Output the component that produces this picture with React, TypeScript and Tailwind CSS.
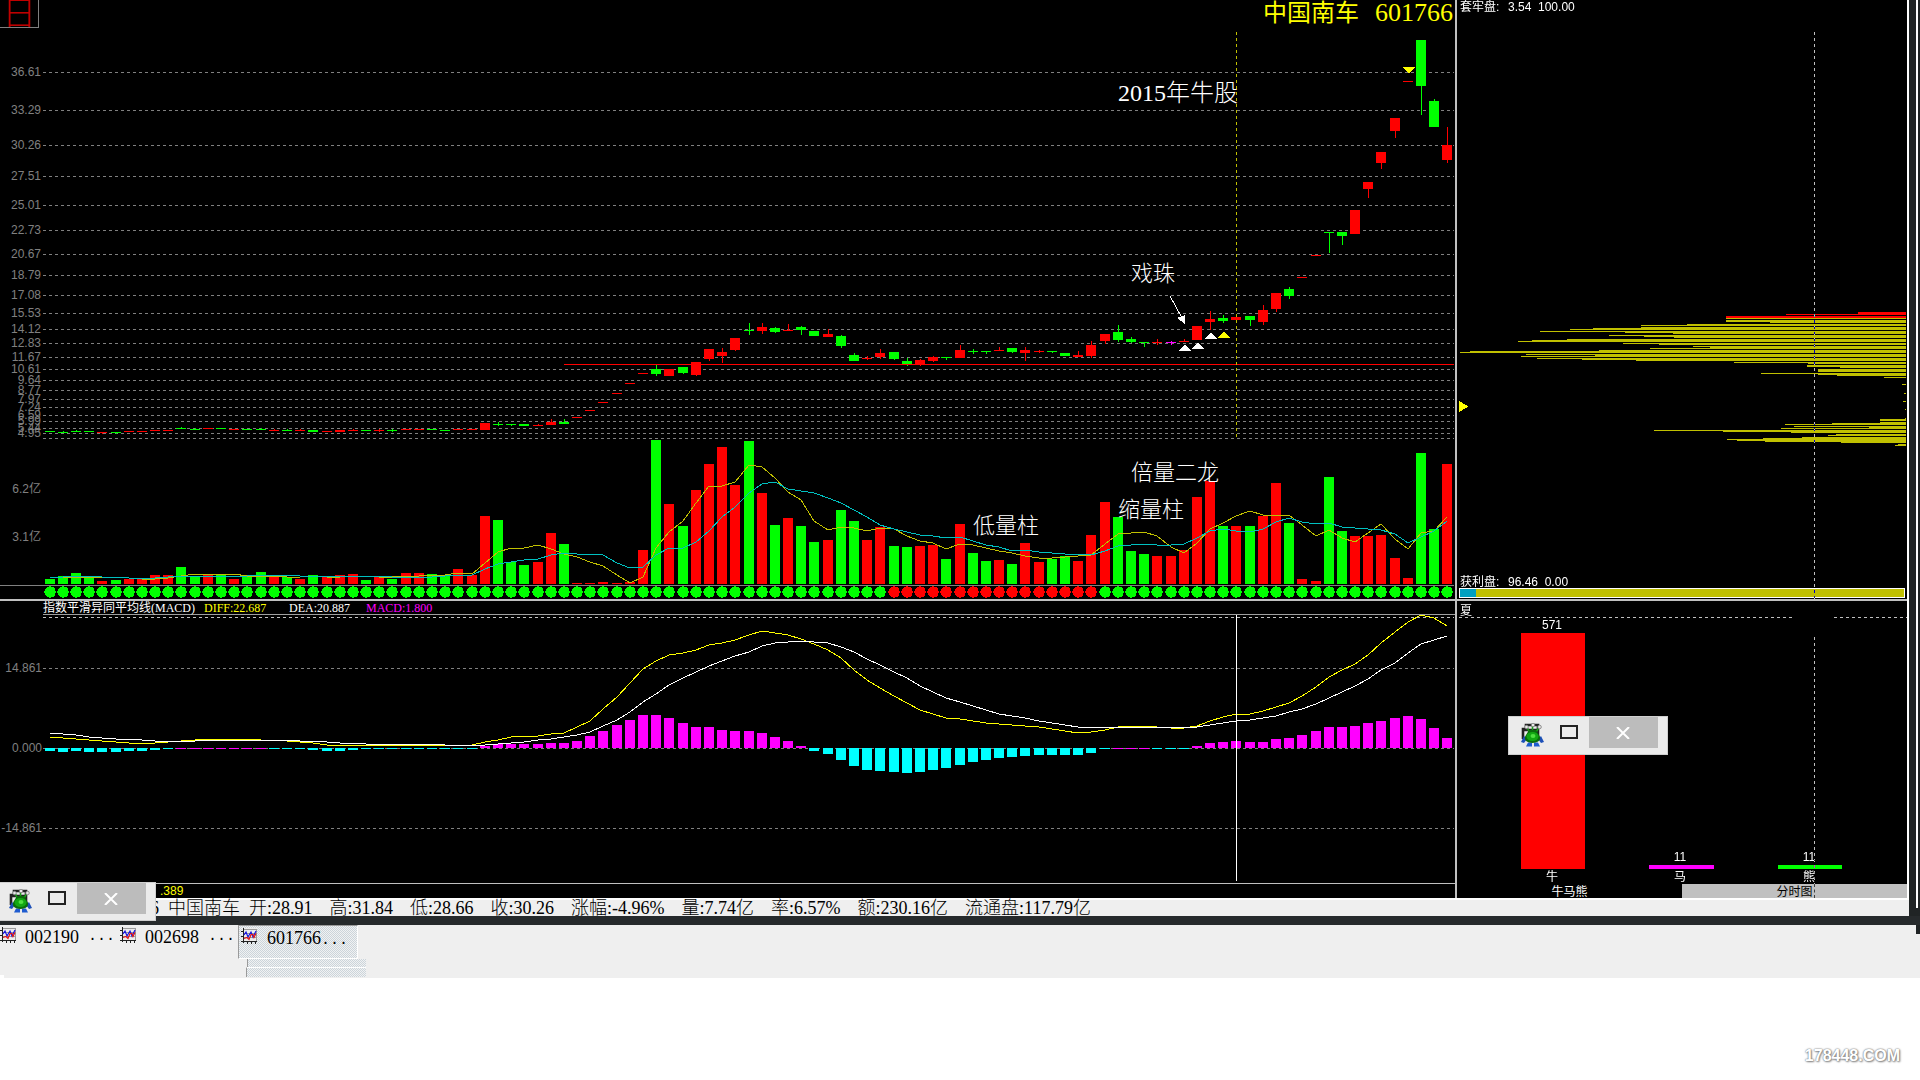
import React from "react";

const PITCH = 13.187;
const barX = (i: number) => Math.floor(45.11 + PITCH * i);

const COLORS: Record<string, string> = { r: "#ff0000", g: "#00ff00", m: "#ff00ff" };

// top of the bar, r = up day, g = down day
const VOLUME: [number, string][] = [
  [579, "g"], [576, "g"], [573, "g"], [577, "g"], [581, "r"], [580, "g"], [579, "r"], [579, "r"], [575, "r"], [575, "r"],
  [567, "g"], [576, "g"], [575, "r"], [575, "g"], [579, "r"], [577, "g"], [572, "g"], [576, "r"], [577, "g"], [579, "r"],
  [575, "g"], [577, "r"], [575, "r"], [574, "r"], [580, "g"], [577, "r"], [579, "g"], [573, "r"], [573, "r"], [574, "g"],
  [576, "g"], [569, "r"], [575, "r"], [516, "r"], [520, "g"], [562, "g"], [565, "g"], [562, "r"], [533, "r"], [544, "g"],
  [583, "r"], [583, "r"], [582, "r"], [583, "r"], [582, "r"], [550, "r"], [440, "g"], [504, "r"], [526, "g"], [490, "r"],
  [464, "r"], [447, "r"], [485, "r"], [441, "g"], [493, "r"], [525, "g"], [518, "r"], [526, "g"], [542, "g"], [540, "r"],
  [510, "g"], [521, "g"], [540, "r"], [527, "r"], [546, "g"], [547, "g"], [546, "r"], [545, "r"], [559, "g"], [524, "r"],
  [553, "g"], [561, "g"], [560, "r"], [564, "g"], [543, "r"], [562, "r"], [559, "g"], [556, "g"], [561, "r"], [535, "r"],
  [502, "r"], [517, "g"], [551, "g"], [554, "g"], [556, "r"], [556, "r"], [550, "r"], [497, "r"], [481, "r"], [526, "g"],
  [526, "r"], [526, "g"], [516, "r"], [483, "r"], [523, "g"], [579, "r"], [581, "r"], [477, "g"], [531, "g"], [536, "r"],
  [536, "r"], [535, "r"], [558, "r"], [578, "r"], [453, "g"], [529, "g"], [464, "r"],
];

// body top, body bottom, wick top, wick bottom
const CANDLES: [number, number, number, number][] = [
  [431, 432, 431, 432], [432, 433, 431, 433], [431, 432, 430, 432], [431, 432, 431, 432], [432, 433, 432, 434],
  [432, 433, 432, 434], [431, 432, 431, 432], [431, 432, 431, 432], [430, 431, 430, 431], [430, 431, 430, 431],
  [428, 429, 427, 429], [429, 430, 428, 430], [428, 429, 428, 429], [428, 429, 428, 429], [429, 430, 429, 430],
  [429, 430, 429, 430], [429, 430, 428, 430], [430, 431, 429, 431], [430, 431, 429, 431], [430, 431, 429, 431],
  [430, 432, 430, 432], [431, 432, 431, 432], [430, 432, 430, 432], [430, 431, 429, 431], [430, 431, 430, 431],
  [430, 431, 429, 432], [430, 431, 429, 432], [429, 430, 429, 430], [429, 430, 429, 430], [429, 430, 429, 430],
  [430, 431, 430, 431], [429, 430, 429, 430], [429, 430, 429, 430], [423, 430, 423, 430], [424, 425, 422, 426],
  [424, 425, 424, 426], [424, 426, 424, 426], [425, 426, 424, 426], [422, 425, 419, 425], [422, 424, 419, 424],
  [417, 418, 417, 418], [410, 411, 410, 411], [402, 403, 402, 403], [393, 394, 393, 394], [383, 384, 383, 384],
  [373, 374, 373, 374], [369, 374, 365, 376], [369, 376, 369, 376], [367, 373, 367, 374], [362, 375, 362, 376],
  [349, 359, 349, 361], [352, 356, 348, 363], [338, 350, 338, 351], [330, 331, 323, 335], [327, 331, 323, 334],
  [328, 332, 327, 333], [330, 331, 324, 331], [327, 330, 326, 335], [331, 336, 331, 336], [334, 337, 329, 337],
  [336, 346, 335, 348], [355, 361, 353, 361], [358, 359, 356, 360], [353, 357, 349, 359], [352, 359, 352, 360],
  [361, 364, 358, 366], [360, 364, 359, 366], [357, 361, 356, 362], [357, 358, 357, 360], [350, 358, 345, 358],
  [351, 352, 349, 354], [351, 352, 351, 354], [350, 351, 347, 351], [348, 352, 348, 353], [350, 353, 347, 361],
  [351, 352, 350, 353], [351, 352, 351, 353], [353, 356, 353, 356], [355, 357, 351, 357], [345, 356, 341, 358],
  [334, 341, 334, 344], [332, 340, 325, 342], [339, 342, 337, 343], [342, 343, 342, 347], [342, 343, 339, 345],
  [342, 343, 341, 345], [341, 342, 339, 342], [326, 340, 326, 340], [319, 322, 311, 330], [318, 321, 315, 323],
  [317, 320, 314, 320], [316, 320, 316, 326], [310, 322, 305, 325], [293, 309, 293, 312], [289, 296, 287, 299],
  [277, 278, 277, 278], [255, 256, 255, 256], [232, 233, 232, 253], [232, 236, 232, 245], [210, 234, 210, 234],
  [182, 189, 182, 198], [152, 163, 152, 169], [118, 131, 118, 138], [81, 82, 81, 82], [40, 86, 40, 115],
  [101, 127, 99, 127], [145, 160, 127, 163],
];

const VOL_MA5 = [
  577, 577, 577, 577, 577, 577, 578, 579, 579, 578, 576, 574, 574, 574, 574, 576, 576, 576, 577, 577, 576, 577, 577, 576,
  576, 577, 577, 576, 576, 575, 575, 573, 574, 563, 552, 548, 548, 545, 549, 554, 557, 562, 566, 575, 583, 577, 548, 532,
  521, 503, 486, 486, 482, 465, 467, 478, 492, 500, 521, 530, 527, 528, 531, 528, 529, 536, 541, 543, 549, 544, 545, 548,
  551, 553, 556, 558, 558, 557, 556, 555, 544, 534, 533, 532, 536, 547, 553, 543, 529, 523, 516, 511, 515, 515, 515, 525,
  536, 530, 538, 542, 533, 524, 539, 549, 533, 531, 517,
];

const VOL_MA10 = [
  577, 577, 576, 576, 577, 577, 578, 578, 578, 577, 576, 576, 577, 576, 577, 576, 575, 575, 575, 576, 576, 576, 576, 576,
  576, 576, 577, 577, 577, 577, 576, 575, 575, 569, 564, 562, 560, 559, 555, 553, 554, 554, 555, 563, 568, 567, 555, 548,
  548, 542, 531, 517, 507, 493, 484, 482, 489, 491, 493, 498, 503, 510, 517, 525, 529, 532, 535, 536, 538, 537, 541, 545,
  547, 551, 550, 552, 553, 554, 554, 555, 551, 546, 545, 544, 545, 545, 544, 538, 531, 529, 531, 532, 529, 522, 518, 522,
  524, 523, 527, 528, 529, 530, 534, 543, 537, 531, 521,
];

const DIFF = [
  737, 738, 739, 740, 741, 742, 743, 743, 743, 742, 741, 740, 739, 739, 739, 739, 740, 740, 741, 742, 743, 745, 745, 745,
  745, 745, 745, 745, 745, 745, 745, 745, 745, 742, 740, 737, 736, 736, 734, 733, 727, 721, 709, 697, 683, 669, 661, 655,
  653, 650, 645, 643, 640, 635, 631, 633, 635, 639, 644, 650, 658, 670, 680, 688, 696, 703, 710, 714, 718, 719, 721, 723,
  724, 725, 726, 727, 729, 731, 733, 732, 730, 727, 726, 726, 727, 728, 728, 726, 721, 717, 714, 714, 711, 707, 703, 696,
  687, 677, 670, 664, 655, 643, 632, 622, 615, 618, 626,
];

const DEA = [
  733, 734, 735, 737, 738, 739, 739, 740, 741, 741, 741, 741, 740, 740, 740, 740, 740, 740, 740, 741, 741, 742, 743, 743,
  744, 744, 744, 744, 744, 744, 745, 745, 745, 745, 744, 743, 742, 740, 739, 737, 735, 732, 726, 720, 712, 702, 694, 685,
  678, 672, 666, 661, 656, 652, 646, 643, 642, 641, 642, 643, 647, 652, 659, 665, 672, 678, 686, 692, 698, 702, 706, 710,
  714, 716, 718, 721, 723, 725, 727, 727, 727, 727, 727, 727, 727, 727, 727, 727, 725, 723, 721, 720, 718, 716, 712, 709,
  704, 698, 692, 686, 679, 670, 663, 653, 644, 640, 636,
];

const MACD = [
  -3, -4, -3, -4, -4, -4, -3, -3, -2, -1, 1, 1, 1, 1, 1, 1, 1, -1, -1, -1, -2, -3, -3, -2, -1, -1, -1, -1, -1, -1, -1, -1,
  -1, 2, 4, 4, 4, 4, 5, 5, 7, 12, 17, 23, 28, 33, 33, 30, 25, 21, 21, 18, 17, 17, 15, 11, 7, 2, -3, -6, -12, -18, -22,
  -23, -24, -25, -24, -22, -20, -17, -14, -12, -10, -9, -8, -7, -7, -7, -7, -5, -1, 1, 1, 1, -1, -1, -1, 2, 5, 6, 7, 6, 6,
  9, 10, 13, 17, 21, 21, 22, 25, 27, 30, 32, 29, 20, 10,
];

const PRICE_GRID: [number, string][] = [
  [72, "36.61"], [110, "33.29"], [145, "30.26"], [176, "27.51"], [205, "25.01"], [230, "22.73"], [254, "20.67"],
  [275, "18.79"], [295, "17.08"], [313, "15.53"], [329, "14.12"], [343, "12.83"], [357, "11.67"], [369, "10.61"],
  [380, "9.64"], [390, "8.77"], [399, "7.97"], [407, "7.24"], [415, "6.59"], [421, "5.99"], [428, "5.44"],
  [433, "4.95"], [438, ""],
];

// y, left edge, height
const CHIPS: [number, number, number?][] = [
  [318, 1726], [320, 1726, 2], [322, 1770], [324, 1687], [325, 1641], [327, 1641], [328, 1593], [329, 1570],
  [331, 1540], [332, 1625], [333, 1673], [335, 1609], [336, 1644], [337, 1674], [339, 1567], [340, 1532], [341, 1518],
  [343, 1623], [344, 1659], [346, 1693], [347, 1710], [348, 1650], [350, 1599], [351, 1470], [352, 1460], [354, 1526],
  [355, 1595], [356, 1521], [358, 1537], [359, 1582], [360, 1636], [362, 1734], [363, 1808], [365, 1807, 2],
  [367, 1840], [369, 1818, 3], [373, 1761], [374, 1818], [375, 1837], [377, 1884], [384, 1902], [393, 1904],
  [401, 1903], [409, 1905], [418, 1905], [419, 1880, 2], [422, 1880], [423, 1832], [424, 1785], [426, 1794],
  [427, 1869], [428, 1781], [430, 1654], [431, 1723], [432, 1791], [434, 1836], [435, 1828], [437, 1802], [438, 1763],
  [439, 1727], [440, 1737], [441, 1765], [442, 1841], [444, 1898], [445, 1895],
];

const HOLDERS = [
  { name: "牛", value: 571, x: 1521, w: 64, top: 633, color: "#ff0000" },
  { name: "马", value: 11, x: 1649, w: 65, top: 865, color: "#ff00ff" },
  { name: "熊", value: 11, x: 1778, w: 64, top: 865, color: "#00ff00" },
];

const QUOTE = [
  "开:28.91", "高:31.84", "低:28.66", "收:30.26", "涨幅:-4.96%", "量:7.74亿", "率:6.57%", "额:230.16亿", "流通盘:117.79亿",
];

const points = (ys: number[]) => ys.map((y, i) => `${barX(i) + 5},${y}`).join(" ");

function HDash({ x1 = 43, x2 = 1454, y, color = "#808080" }: { x1?: number; x2?: number; y: number; color?: string }) {
  return <line x1={x1} x2={x2} y1={y + 0.5} y2={y + 0.5} stroke={color} strokeDasharray="3 3" />;
}

function Line({ ys, color }: { ys: number[]; color: string }) {
  return <polyline points={points(ys)} fill="none" stroke={color} strokeWidth="1" />;
}

function PriceChart() {
  return (
    <svg
      viewBox="0 0 1455 599"
      className="block w-full font-['Liberation_Sans','Noto_Sans_CJK_SC',sans-serif] text-[12px]"
      shapeRendering="crispEdges"
      role="img"
      aria-label="中国南车 K线与成交量"
    >
      {PRICE_GRID.map(([y, label]) => (
        <g key={y}>
          <HDash y={y} />
          {label && <text x="41" y={y + 4} textAnchor="end" fill="#808080">{label}</text>}
        </g>
      ))}
      <text x="41" y="493" textAnchor="end" fill="#808080">6.2亿</text>
      <text x="41" y="541" textAnchor="end" fill="#808080">3.1亿</text>
      {CANDLES.map(([top, bottom, high, low], i) => {
        const fill = i === 85 ? COLORS.m : COLORS[VOLUME[i][1]];
        return (
          <g key={i} fill={fill}>
            <rect x={barX(i)} y={top} width="10" height={bottom - top} />
            <rect x={barX(i) + 5} y={high} width="1" height={low - high} />
          </g>
        );
      })}
      <rect x="564" y="364" width="890" height="1" fill="#ff0000" />
      <line x1="1236.5" x2="1236.5" y1="32" y2="438" stroke="#c0c000" strokeDasharray="3 3" />
      {VOLUME.map(([top, c], i) => (
        <rect key={i} x={barX(i)} y={top} width="10" height={584 - top} fill={COLORS[c]} />
      ))}
      <Line ys={VOL_MA5} color="#c0c000" />
      <Line ys={VOL_MA10} color="#00c0c0" />
      <rect x="0" y="585" width="1454" height="1" fill="#808080" />
      {VOLUME.map((_, i) => {
        const x = barX(i);
        return (
          <g key={i} fill={i >= 64 && i < 80 ? "#ff0000" : "#00ff00"}>
            <path d={`M${x + 2} 587h6l2 2v6l-2 2h-6l-2-2v-6z`} />
            <rect x={x + 4} y="586" width="2" height="12" />
            <rect x={x - 1} y="591" width="12" height="2" />
          </g>
        );
      })}
      <g fill="#ffffff">
        <path d="M1178 351h13l-5-6h-2z" />
        <path d="M1191 349h13l-5-6h-2z" />
        <path d="M1204 339h13l-5-6h-2z" />
        <path d="M1177 318l8-3v9z" />
      </g>
      <line x1="1170" y1="296" x2="1182" y2="318" stroke="#ffffff" />
      <path d="M1217 338h13l-5-6h-2z" fill="#ffff00" />
      <path d="M1402 67h13l-5 6h-2z" fill="#ffff00" />
      <g fill="#ffffff" className="font-['Liberation_Serif','Noto_Sans_CJK_SC',serif] text-[22px] font-light">
        <text x="1118" y="101" className="text-[24px]">2015年牛股</text>
        <text x="1131" y="281">戏珠</text>
        <text x="1131" y="480">倍量二龙</text>
        <text x="1118" y="517">缩量柱</text>
        <text x="973" y="533">低量柱</text>
      </g>
      <g fill="#ffff00" className="font-['Liberation_Serif','Noto_Sans_CJK_SC',serif]">
        <text x="1263" y="21" className="text-[24px]">中国南车</text>
        <text x="1453" y="21" textAnchor="end" className="text-[26px]">601766</text>
      </g>
    </svg>
  );
}

function MacdChart() {
  return (
    <svg
      viewBox="0 615 1455 268"
      className="block w-full font-['Liberation_Sans',sans-serif] text-[12px]"
      shapeRendering="crispEdges"
      role="img"
      aria-label="MACD"
    >
      <HDash y={617} color="#c0c0c0" />
      <HDash y={668} />
      <HDash y={748} />
      <HDash y={828} />
      <g fill="#808080" textAnchor="end">
        <text x="42" y="672">14.861</text>
        <text x="42" y="752">0.000</text>
        <text x="42" y="832">-14.861</text>
      </g>
      {MACD.map((v, i) => (
        <rect
          key={i}
          x={barX(i)}
          y={v > 1 ? 748 - v : 748}
          width="10"
          height={Math.abs(v)}
          fill={v > 0 ? "#ff00ff" : "#00ffff"}
        />
      ))}
      <Line ys={DIFF} color="#ffff00" />
      <Line ys={DEA} color="#ffffff" />
      <rect x="1236" y="615" width="1" height="266" fill="#ffffff" />
    </svg>
  );
}

function ChipChart() {
  return (
    <svg
      viewBox="1457 0 450 599"
      className="isolate block w-full font-['Liberation_Sans','Noto_Sans_CJK_SC',sans-serif] text-[12px]"
      shapeRendering="crispEdges"
      role="img"
      aria-label="筹码分布"
    >
      <rect x="1457" y="0" width="450" height="599" fill="#000000" />
      <text x="1460" y="11" fill="#ffffff">套牢盘:</text>
      <text x="1508" y="11" fill="#ffffff">3.54 &nbsp;100.00</text>
      <g fill="#ff0000">
        <rect x="1858" y="312" width="48" height="2" />
        <rect x="1786" y="314" width="120" height="1" />
        <rect x="1726" y="316" width="180" height="2" />
      </g>
      {CHIPS.map(([y, x, h = 1]) => (
        <rect key={y} x={x} y={y} width={1906 - x} height={h} fill="#c0c000" />
      ))}
      <path d="M1459 401l9 5v1l-9 5z" fill="#ffff00" />
      <text x="1460" y="586" fill="#ffffff">获利盘:</text>
      <text x="1508" y="586" fill="#ffffff">96.46 &nbsp;0.00</text>
      <rect x="1459" y="588" width="446" height="10" fill="#ffffff" />
      <rect x="1460" y="589" width="16" height="8" fill="#00a0c0" />
      <rect x="1476" y="589" width="428" height="8" fill="#c0c000" />
      <line x1="1814.5" x2="1814.5" y1="32" y2="599" stroke="#c0c0c0" strokeDasharray="3 3" className="mix-blend-difference" />
    </svg>
  );
}

function HolderChart() {
  return (
    <svg
      viewBox="1457 601 450 283"
      className="isolate block w-full font-['Liberation_Sans','Noto_Sans_CJK_SC',sans-serif] text-[12px]"
      shapeRendering="crispEdges"
      role="img"
      aria-label="牛马熊"
    >
      <rect x="1457" y="601" width="450" height="283" fill="#000000" />
      <text x="1460" y="615" fill="#ffffff">夏</text>
      <HDash x1={1459} x2={1793} y={617} color="#c0c0c0" />
      <HDash x1={1834} x2={1907} y={617} color="#c0c0c0" />
      {HOLDERS.map((h) => (
        <g key={h.name} textAnchor="middle" fill="#ffffff">
          <rect x={h.x} y={h.top} width={h.w} height={869 - h.top} fill={h.color} />
          <text x={h.x + 31} y={h.top - 4}>{h.value}</text>
          <text x={h.x + 31} y="881">{h.name}</text>
        </g>
      ))}
      <line x1="1814.5" x2="1814.5" y1="637" y2="884" stroke="#c0c0c0" strokeDasharray="3 3" className="mix-blend-difference" />
    </svg>
  );
}

function FrogIcon() {
  return (
    <svg viewBox="0 0 24 24" className="size-6 shrink-0" aria-hidden="true">
      <path d="M2 16V6h3V2h12v13M2 7h14" fill="none" stroke="#222" strokeWidth="2.6" />
      <path d="M3 13l-3 6 3 1 3-4zM20 13l3 6-3 1-3-4z" fill="#1d50b8" />
      <path d="M5 23.500l2-4h4v4zM13 23.500v-4h4l2 4z" fill="#1f5cd0" />
      <path d="M9 11L6 4M11.500 10V3M14 11l4-7" stroke="#18a018" strokeWidth="1.600" />
      <path d="M8 7h7l3 5c3 4 0 8-6.500 8S2 16 5 12z" fill="#0a6d0c" />
      <ellipse cx="11.500" cy="13.500" rx="6" ry="4.500" fill="#12a812" />
      <ellipse cx="12" cy="13" rx="2.500" ry="2" fill="#4ee040" />
      <g fill="#e8e8e8" stroke="#777" strokeWidth="0.800">
        <circle cx="5.500" cy="4" r="1.800" />
        <circle cx="12" cy="2" r="1.800" />
        <circle cx="18.500" cy="4" r="1.800" />
      </g>
    </svg>
  );
}

function FloatingWindow({ className }: { className: string }) {
  return (
    <div className={`absolute flex h-[39px] w-40 items-start border border-[#cfcfcf] bg-[#ebebeb] ${className}`}>
      <div className="mt-[6px] ml-3">
        <FrogIcon />
      </div>
      <button type="button" aria-label="最大化" className="mt-2 ml-[15px] h-[14px] w-[18px] border-2 border-[#222]" />
      <button type="button" aria-label="关闭" className="ml-[11px] flex h-[31px] w-[69px] items-center justify-center bg-[#bcbcbc]">
        <svg viewBox="0 0 14 12" className="mr-px h-3 w-[14px]" aria-hidden="true">
          <path d="M1 0l12 12M13 0L1 12" stroke="#fff" strokeWidth="2" />
        </svg>
      </button>
    </div>
  );
}

function ChartIcon() {
  return (
    <svg viewBox="0 0 16 16" className="size-4 shrink-0" aria-hidden="true">
      <path d="M1 0h15v13H1z" fill="#ececec" />
      <path d="M2 1.500h14M2 5.500h14M2 9.500h14M15.500 1v12" stroke="#9c9c9c" fill="none" />
      <path d="M2.500 0v15M0 13.500h16M0 3.500h2M0 8.500h2M6.500 13v3M10.500 13v3M14.500 13v3" stroke="#222" fill="none" />
      <path d="M3 7l2-3 2 5 3-5 2 5 3-6" fill="none" stroke="#1515e0" strokeWidth="1.200" />
      <path d="M3 10.500l3-1 2 2 2-5h2l1 3 2-4" fill="none" stroke="#e01515" strokeWidth="1.200" />
    </svg>
  );
}

function Dots() {
  return <span className="font-['Liberation_Mono',monospace] text-[15px]">...</span>;
}

export default function App() {
  return (
    <div className="relative flex min-h-screen flex-col overflow-hidden bg-white font-['Liberation_Serif','Noto_Sans_CJK_SC',serif] text-black">
      <div className="flex bg-[#202425]">
        <div className="min-w-0 flex-1 bg-[#efefef]">
          <div className="flex border-b-2 border-white bg-black">
            <main className="min-w-0 flex-[1455]">
              <PriceChart />
              <div className="h-[2px] bg-[#c0c0c0]" />
              <header className="ml-[43px] flex h-[14px] border-b border-[#a0a0a0] text-[12px] leading-[14px] whitespace-pre text-white">
                <span className="w-[161px]">指数平滑异同平均线(MACD)</span>
                <span className="w-[85px] text-[#ffff00]">DIFF:22.687</span>
                <span className="w-[77px]">DEA:20.887</span>
                <span className="text-[#ff00ff]">MACD:1.800</span>
              </header>
              <MacdChart />
              <div className="h-[15px] border-t border-[#c0c0c0] pl-[160px] font-['Liberation_Sans',sans-serif] text-[12px] leading-[14px] text-[#ffff00]">
                .389
              </div>
            </main>
            <div className="w-[2px] bg-[#c0c0c0]" />
            <aside className="min-w-0 flex-[450]">
              <ChipChart />
              <div className="h-[2px] bg-[#c0c0c0]" />
              <HolderChart />
              <nav className="relative flex h-[14px] font-['Noto_Sans_CJK_SC',sans-serif] text-[12px] leading-[14px]">
                <button type="button" className="h-[14px] flex-1 text-white">牛马熊</button>
                <button type="button" className="h-[14px] flex-1 bg-[#c0c0c0] text-black">分时图</button>
                <div className="absolute top-0 left-[357px] h-full border-l border-dashed border-[#404040]" />
              </nav>
            </aside>
            <div className="w-[2px] bg-white" />
          </div>
          <footer className="flex h-4 gap-[17px] pl-[105px] text-[18px] leading-4 font-light whitespace-nowrap">
            <span className="-mr-2">601766&nbsp; 中国南车</span>
            {QUOTE.map((q) => (
              <span key={q}>{q}</span>
            ))}
          </footer>
        </div>
        <div className="w-[7px]" />
        <div className="mb-2 w-[2px] bg-white" />
        <div className="w-[2px]" />
      </div>
      <div className="h-[9px] bg-[#262a2c]" />
      <div className="relative h-[53px] bg-[#efefef] text-[18px] leading-5">
        <div className="flex items-start">
          <button type="button" className="flex w-[120px] gap-[9px] pt-[2px] text-left">
            <ChartIcon />
            <span>002190</span>
            <Dots />
          </button>
          <button type="button" className="flex w-[118px] gap-[9px] pt-[2px] text-left">
            <ChartIcon />
            <span>002698</span>
            <Dots />
          </button>
          <div>
            <button
              type="button"
              className="flex h-[34px] w-[120px] gap-[10px] border-t border-r border-b border-l border-t-[#9a9a9a] border-r-white border-b-white border-l-[#9a9a9a] bg-[repeating-conic-gradient(#ccd4da_0_25%,#f0f2f3_0_50%)] bg-[length:2px_2px] pt-[2px] pl-[2px] text-left"
            >
              <ChartIcon />
              <span>601766<Dots /></span>
            </button>
            <div className="ml-[9px] h-2 w-[119px] border-l border-[#9a9a9a] bg-[repeating-conic-gradient(#ccd4da_0_25%,#f0f2f3_0_50%)] bg-[length:2px_2px]" />
            <div className="ml-2 h-[10px] w-[120px] border-t border-l border-t-white border-l-[#9a9a9a] bg-[repeating-conic-gradient(#ccd4da_0_25%,#f0f2f3_0_50%)] bg-[length:2px_2px]" />
          </div>
        </div>
        <div className="absolute top-0 right-0 h-[9px] w-1 bg-[#202425]" />
        <div className="absolute bottom-0 left-0 h-[3px] w-1 bg-white" />
      </div>
      <div className="flex flex-1 items-end justify-end pr-[20px] pb-[14px]">
        <span className="font-['Liberation_Sans',sans-serif] text-[16px] leading-5 font-bold text-white [text-shadow:0_0_2px_#777,1px_1px_2px_#888,0_0_1px_#999]">
          178448.COM
        </span>
      </div>

      <button
        type="button"
        className="absolute top-0 left-0 flex h-7 w-[39px] items-end justify-center overflow-hidden border-r border-b border-[#808080] font-['Noto_Sans_CJK_SC',sans-serif] text-[34px] leading-[30px] font-light text-[#c00000]"
      >
        日
      </button>
      <FloatingWindow className="top-[882px] -left-1" />
      <FloatingWindow className="top-[716px] right-[252px]" />
    </div>
  );
}
